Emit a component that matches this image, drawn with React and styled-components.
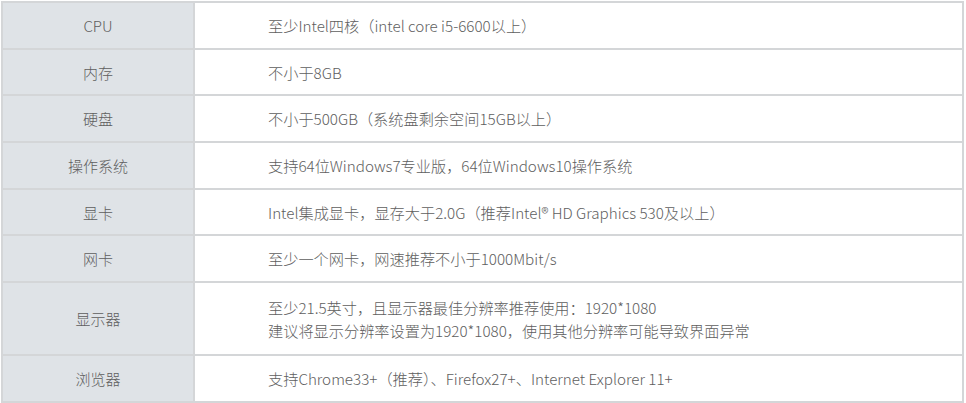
import React from "react";
import styled, { createGlobalStyle } from "styled-components";

const GlobalStyle = createGlobalStyle`
  body {
    margin: 0;
    background: #ffffff;
    font-family: "Noto Sans CJK SC", "Noto Sans", sans-serif;
  }
`;

const Wrapper = styled.div`
  padding: 1px 2px 0 1px;
`;

const Table = styled.table`
  width: 963px;
  border-collapse: collapse;
  table-layout: fixed;
  color: #5e5e5e;
  font-weight: 300;
`;

const LabelCell = styled.th`
  width: 190px;
  background: #dfe3e7;
  border: 2px solid #d4d6d8;
  font-size: 15px;
  font-weight: 300;
  text-align: center;
  vertical-align: middle;
  height: ${(p) => (p.tall ? "71px" : "44.7px")};
  padding: 0;
`;

const ValueCell = styled.td`
  border: 2px solid #d4d6d8;
  background: #ffffff;
  font-size: 15.2px;
  padding: 0 0 0 73px;
  vertical-align: middle;
  line-height: 23px;
`;

const Line = styled.div`
  white-space: nowrap;
`;

const rows = [
  { label: "CPU", lines: ["至少Intel四核（intel core i5-6600以上）"] },
  { label: "内存", lines: ["不小于8GB"] },
  { label: "硬盘", lines: ["不小于500GB（系统盘剩余空间15GB以上）"] },
  { label: "操作系统", lines: ["支持64位Windows7专业版，64位Windows10操作系统"] },
  { label: "显卡", lines: ["Intel集成显卡，显存大于2.0G（推荐Intel® HD Graphics 530及以上）"] },
  { label: "网卡", lines: ["至少一个网卡，网速推荐不小于1000Mbit/s"] },
  {
    label: "显示器",
    lines: [
      "至少21.5英寸，且显示器最佳分辨率推荐使用：1920*1080",
      "建议将显示分辨率设置为1920*1080，使用其他分辨率可能导致界面异常",
    ],
  },
  { label: "浏览器", lines: ["支持Chrome33+（推荐）、Firefox27+、Internet Explorer 11+"] },
];

const App = () => {
  return (
    <Wrapper>
      <GlobalStyle />
      <Table>
        <tbody>
          {rows.map((row) => (
            <tr key={row.label}>
              <LabelCell tall={row.lines.length > 1}>{row.label}</LabelCell>
              <ValueCell>
                {row.lines.map((l) => (
                  <Line key={l}>{l}</Line>
                ))}
              </ValueCell>
            </tr>
          ))}
        </tbody>
      </Table>
    </Wrapper>
  );
};

export default App;
